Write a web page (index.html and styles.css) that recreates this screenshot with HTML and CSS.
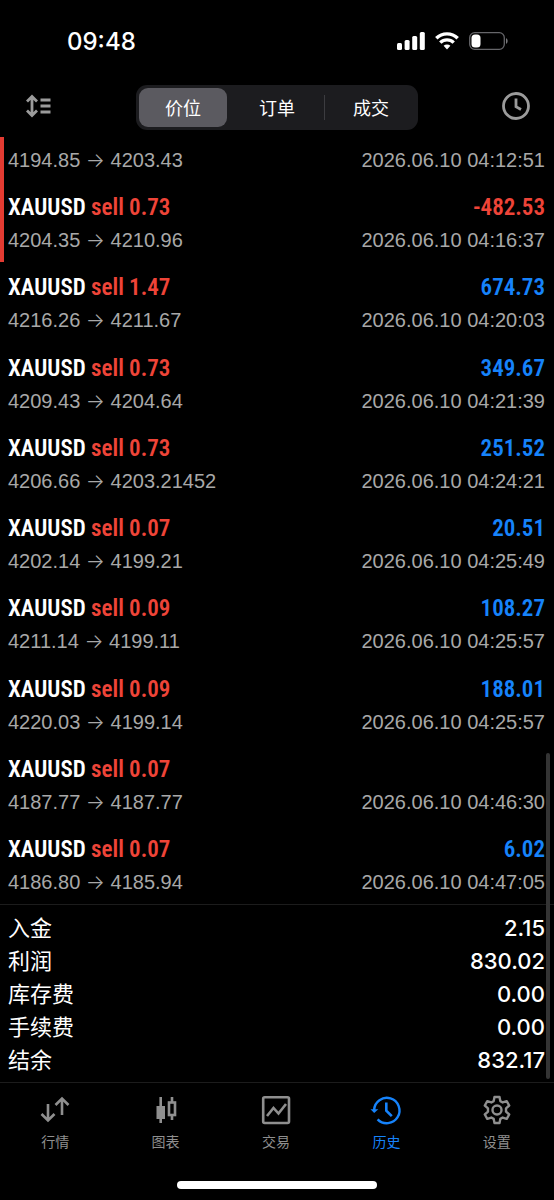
FILE: index.html
```html
<!DOCTYPE html>
<html lang="zh-CN">
<head>
<meta charset="utf-8">
<meta name="viewport" content="width=device-width, initial-scale=1">
<title>历史</title>
<link rel="stylesheet" href="styles.css">
</head>
<body>
<div class="app">
  <div class="status">
    <time class="clock">09:48</time>
    <div class="status-icons">
      <svg width="28" height="18" viewBox="0 0 28 18" fill="#fff"><rect x="0" y="11" width="5" height="7" rx="1.5"/><rect x="7.6" y="8" width="5" height="10" rx="1.5"/><rect x="15.2" y="4" width="5" height="14" rx="1.5"/><rect x="22.8" y="0" width="5" height="18" rx="1.5"/></svg>
      <svg width="24" height="18" viewBox="0 0 24 18" fill="none" stroke="#fff" stroke-width="3.4"><path d="M1.300 6.300a15.200 15.200 0 0 1 21.400 0"/><path d="M5.300 10.600a9.500 9.500 0 0 1 13.400 0"/><path d="M12 17.500l-3.400-3.700a4.900 4.900 0 0 1 6.800 0z" fill="#fff" stroke="none"/></svg>
      <svg width="39" height="18" viewBox="0 0 39 18"><rect x=".7" y=".7" width="34.6" height="16.6" rx="5" fill="none" stroke="#66666a" stroke-width="1.3"/><rect x="2.5" y="2.6" width="9" height="12.8" rx="3.5" fill="#fff"/><path d="M37 6q1.700.8 1.700 3T37 12z" fill="#77777a"/></svg>
    </div>
  </div>
  <header class="toolbar">
    <button class="icon-button" aria-label="排序">
      <svg width="26" height="22" viewBox="0 0 26 22" fill="none" stroke="#9b9b9b" stroke-width="2.8"><path d="M6 2v18M1 6.500l5-5 5 5M1 15.500l5 5 5-5M14.500 5h10M14.500 11h10M14.500 17h10"/></svg>
    </button>
    <div class="segments">
      <button class="segment selected">价位</button>
      <button class="segment">订单</button>
      <button class="segment divided">成交</button>
    </div>
    <button class="icon-button" aria-label="时间范围">
      <svg width="28" height="28" viewBox="0 0 28 28" fill="none" stroke="#9b9b9b" stroke-width="2.8"><circle cx="14" cy="14" r="12.5"/><path d="M14 6.500v8.200l5 2.800"/></svg>
    </button>
  </header>
  <main class="history">
    <ul class="deals">
      <li class="deal loss partial"><p class="detail"><span>4194.85 <i>→</i> 4203.43</span><time>2026.06.10 04:12:51</time></p></li>
      <li class="deal loss"><p class="head"><span>XAUUSD <b class="sell">sell 0.73</b></span><b class="sell">-482.53</b></p><p class="detail"><span>4204.35 <i>→</i> 4210.96</span><time>2026.06.10 04:16:37</time></p></li>
      <li class="deal"><p class="head"><span>XAUUSD <b class="sell">sell 1.47</b></span><b class="gain">674.73</b></p><p class="detail"><span>4216.26 <i>→</i> 4211.67</span><time>2026.06.10 04:20:03</time></p></li>
      <li class="deal"><p class="head"><span>XAUUSD <b class="sell">sell 0.73</b></span><b class="gain">349.67</b></p><p class="detail"><span>4209.43 <i>→</i> 4204.64</span><time>2026.06.10 04:21:39</time></p></li>
      <li class="deal"><p class="head"><span>XAUUSD <b class="sell">sell 0.73</b></span><b class="gain">251.52</b></p><p class="detail"><span>4206.66 <i>→</i> 4203.21452</span><time>2026.06.10 04:24:21</time></p></li>
      <li class="deal"><p class="head"><span>XAUUSD <b class="sell">sell 0.07</b></span><b class="gain">20.51</b></p><p class="detail"><span>4202.14 <i>→</i> 4199.21</span><time>2026.06.10 04:25:49</time></p></li>
      <li class="deal"><p class="head"><span>XAUUSD <b class="sell">sell 0.09</b></span><b class="gain">108.27</b></p><p class="detail"><span>4211.14 <i>→</i> 4199.11</span><time>2026.06.10 04:25:57</time></p></li>
      <li class="deal"><p class="head"><span>XAUUSD <b class="sell">sell 0.09</b></span><b class="gain">188.01</b></p><p class="detail"><span>4220.03 <i>→</i> 4199.14</span><time>2026.06.10 04:25:57</time></p></li>
      <li class="deal"><p class="head"><span>XAUUSD <b class="sell">sell 0.07</b></span></p><p class="detail"><span>4187.77 <i>→</i> 4187.77</span><time>2026.06.10 04:46:30</time></p></li>
      <li class="deal"><p class="head"><span>XAUUSD <b class="sell">sell 0.07</b></span><b class="gain">6.02</b></p><p class="detail"><span>4186.80 <i>→</i> 4185.94</span><time>2026.06.10 04:47:05</time></p></li>
    </ul>
    <dl class="summary">
      <div class="total"><dt>入金</dt><dd>2.15</dd></div>
      <div class="total"><dt>利润</dt><dd>830.02</dd></div>
      <div class="total"><dt>库存费</dt><dd>0.00</dd></div>
      <div class="total"><dt>手续费</dt><dd>0.00</dd></div>
      <div class="total"><dt>结余</dt><dd>832.17</dd></div>
    </dl>
    <div class="scrollbar"></div>
  </main>
  <nav class="tabs">
    <a class="tab" href="#quotes">
      <svg width="30" height="30" viewBox="0 0 30 30" fill="none" stroke="currentColor" stroke-width="2.6"><path d="M8 9v16.500M1.500 19L8 25.500l6.500-6.500M22 20V3.500M15.500 10L22 3.500l6.500 6.500"/></svg>
      <span>行情</span></a>
    <a class="tab" href="#chart">
      <svg width="30" height="30" viewBox="0 0 30 30" fill="none" stroke="currentColor" stroke-width="2.6"><path d="M9.700 2v26M21 2v5M21 20.500V25"/><rect x="5.5" y="11" width="8.5" height="13" fill="currentColor" stroke="none"/><rect x="18" y="7.500" width="6" height="12.500"/></svg>
      <span>图表</span></a>
    <a class="tab" href="#trade">
      <svg width="30" height="30" viewBox="0 0 30 30" fill="none" stroke="currentColor" stroke-width="2.6"><rect x="2.2" y="2.2" width="25.8" height="25.8" rx="1.5"/><path d="M6 21l6.500-8 5 5.500L25 9"/></svg>
      <span>交易</span></a>
    <a class="tab active" href="#history">
      <svg width="30" height="30" viewBox="0 0 30 30" fill="none" stroke="currentColor" stroke-width="2.4"><path d="M3.100 15a12.700 12.700 0 1 1 3.500 9.300"/><path d="M-.5 14.200h7.800l-4.100 3.900z" fill="currentColor" stroke="none"/><path d="M15.300 7.500v8.100l5.500 5.500" stroke-width="2.6"/></svg>
      <span>历史</span></a>
    <a class="tab" href="#settings">
      <svg width="30" height="30" viewBox="0.7 0.5 22.6 22.6" fill="none" stroke="currentColor" stroke-width="1.8" stroke-linejoin="round"><path d="M10.100 2h3.800l.6 3.100 1.800 1 3-1 1.900 3.300-2.400 2.100v2.600l2.400 2.100-1.900 3.300-3-1-1.800 1-.6 3.100h-3.800l-.6-3.100-1.800-1-3 1-1.900-3.300 2.400-2.100v-2.600L2.800 8.400l1.900-3.300 3 1 1.800-1z"/><circle cx="12" cy="11.8" r="3.4"/></svg>
      <span>设置</span></a>
  </nav>
  <div class="home"></div>
</div>
</body>
</html>
```
FILE: styles.css
```css
* { box-sizing: border-box; margin: 0; padding: 0; }
body { background: #000; color: #fff; font-family: Inter, "Noto Sans CJK SC", sans-serif; }
button { border: 0; background: none; color: inherit; font: inherit; }
b { font-weight: inherit; }
svg { display: block; overflow: visible; }
.app { display: flex; flex-direction: column; min-height: 100vh; }

.status { display: flex; justify-content: space-between; align-items: center; height: 82px; padding: 0 46px 0 67px; }
.clock { font-size: 24px; font-weight: 500; }
.status-icons { display: flex; align-items: center; gap: 10px; }

.toolbar { display: grid; grid-template-columns: 1fr 282px 1fr; align-items: start; padding: 3px 24px 7px; }
.icon-button { display: flex; align-items: center; justify-self: start; height: 42px; padding: 0 2px; }
.icon-button:last-child { justify-self: end; padding: 0; }
.segments { display: grid; grid-template-columns: repeat(3, 1fr); height: 45px; border-radius: 11px; background: #1c1c1f; }
.segment { position: relative; margin: 3px; padding-bottom: 2px; font-size: 18px; border-radius: 9px; }
.selected { background: #5b5a60; }
.divided::before { content: ""; position: absolute; left: -3px; top: 7px; bottom: 7px; width: 1px; background: #3c3c40; }

.history { position: relative; display: flex; flex: 1; flex-direction: column; }
.deals { display: flex; flex: 1; flex-direction: column; justify-content: space-between; list-style: none; border-bottom: 1px solid #1c1c1c; }
.deal { padding: 9px 9px 5px 8px; }
.loss { border-left: 4px solid #e33b32; padding-left: 4px; }
.partial { padding-top: 7px; }
.head, .detail { display: flex; justify-content: space-between; line-height: 33px; white-space: pre; }
.head { font-family: "Roboto Condensed", "Liberation Sans Narrow", "Liberation Sans", sans-serif; font-size: 23px; font-weight: 600; }
.detail { font-family: "Liberation Sans", Arial, sans-serif; font-size: 20px; color: #a8a8a8; }
.detail i { font-family: Inter, sans-serif; font-style: normal; font-weight: 300; line-height: 1; }
.sell { color: #ee4438; }
.gain { color: #1683fb; }

.summary { padding: 7px 9px 5px 8px; }
.total { display: flex; justify-content: space-between; font-size: 22px; line-height: 33px; }
.total dd { font-weight: 500; }
.scrollbar { position: absolute; right: 4px; bottom: 3px; width: 4px; height: 326px; border-radius: 2px; background: #343434; }

.tabs { display: grid; grid-template-columns: repeat(5, 1fr); padding: 12px 2px 0 0; border-top: 1px solid #1c1c1c; }
.tab { display: flex; flex-direction: column; align-items: center; gap: 7px; color: #8f8f8f; font-size: 14px; line-height: 20px; text-decoration: none; }
.active { color: #1683fb; }
.home { align-self: center; width: 36%; height: 8px; margin: 29px 0 11px; border-radius: 4px; background: #fff; }
```
